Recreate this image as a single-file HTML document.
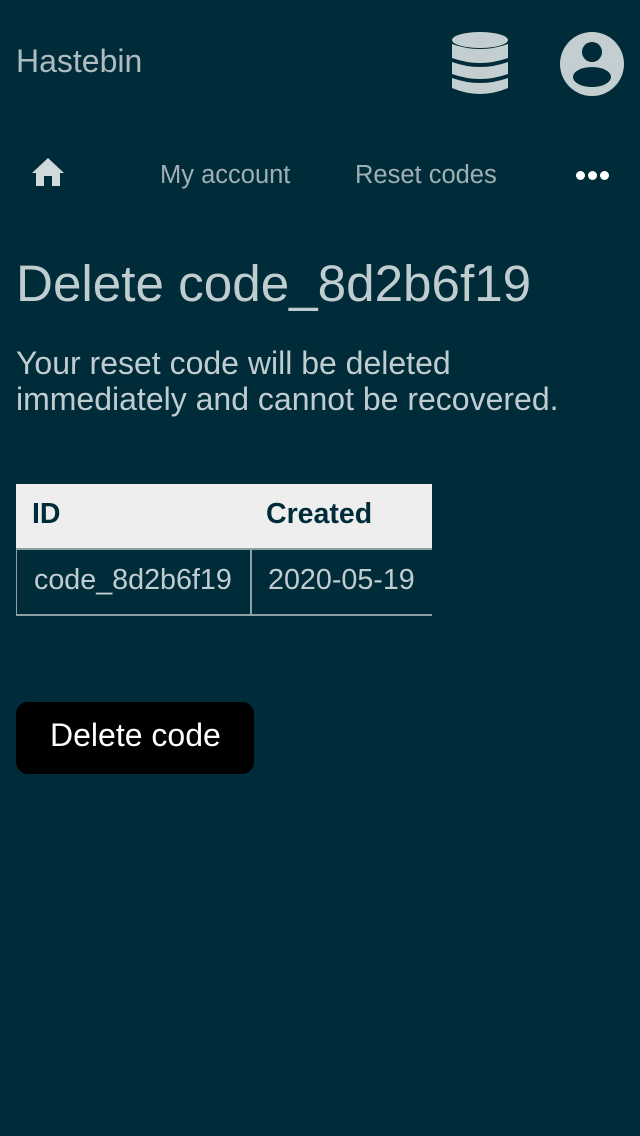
<!DOCTYPE html>
<html><head><meta charset="utf-8"><style>
body{margin:0;width:640px;height:1136px;background:#002b38;font-family:"Liberation Sans",sans-serif;color:#c0cdd0;position:relative;overflow:hidden}
.a{position:absolute}
</style></head><body>
<div class="a" style="left:16px;top:43px;font-size:32px;color:#aebcc0">Hastebin</div>
<svg class="a" style="left:452px;top:32px" width="56" height="64" viewBox="0 0 56 64">
<ellipse cx="28" cy="8" rx="28" ry="8" fill="#c3ced1"/>
<path d="M0 12 Q28 22 56 12 V26 Q28 36 0 26Z" fill="#c3ced1"/>
<path d="M0 30 Q28 40 56 30 V42 Q28 52 0 42Z" fill="#c3ced1"/>
<path d="M0 46 Q28 56 56 46 V56 Q28 68 0 56Z" fill="#c3ced1"/>
</svg>
<svg class="a" style="left:560px;top:32px" width="64" height="64" viewBox="0 0 64 64">
<circle cx="32" cy="32" r="32" fill="#c3ced1"/>
<circle cx="32" cy="20" r="10" fill="#002b38"/>
<ellipse cx="32" cy="45" rx="19" ry="10" fill="#002b38"/>
</svg>
<svg class="a" style="left:32px;top:158px" width="32" height="28" viewBox="0 0 32 28">
<path d="M16 0 L32 15 H28 V28 H20 V18 H12 V28 H4 V15 H0Z" fill="#d0dadc"/>
</svg>
<div class="a" style="left:160px;top:161px;font-size:25.5px;color:#9fb0b5">My account</div>
<div class="a" style="left:355px;top:161px;font-size:25.5px;color:#9fb0b5">Reset codes</div>
<div class="a" style="left:576px;top:171px;width:34px;height:9px">
<span class="a" style="left:0;top:0;width:9px;height:9px;border-radius:50%;background:#fff"></span>
<span class="a" style="left:12px;top:0;width:9px;height:9px;border-radius:50%;background:#fff"></span>
<span class="a" style="left:24px;top:0;width:9px;height:9px;border-radius:50%;background:#fff"></span>
</div>
<div class="a" style="left:16px;top:254px;font-size:51.2px;color:#c0cdd0">Delete code_8d2b6f19</div>
<div class="a" style="left:16px;top:345px;font-size:32px;line-height:36px;color:#c0cdd0">Your reset code will be deleted<br>immediately and cannot be recovered.</div>
<div class="a" style="left:16px;top:484px;width:416px;height:64px;background:#eeeeee;border-bottom:2px solid #8fa0a5"></div>
<div class="a" style="left:32px;top:498px;font-size:28.5px;font-weight:bold;color:#002b38">ID</div>
<div class="a" style="left:266px;top:498px;font-size:28.5px;font-weight:bold;color:#002b38">Created</div>
<div class="a" style="left:16px;top:550px;width:1px;height:65px;background:#8fa0a5"></div>
<div class="a" style="left:250px;top:550px;width:2px;height:65px;background:#8fa0a5"></div>
<div class="a" style="left:16px;top:614px;width:416px;height:2px;background:#8fa0a5"></div>
<div class="a" style="left:34px;top:564px;font-size:28.7px;color:#c0cdd0">code_8d2b6f19</div>
<div class="a" style="left:268px;top:564px;font-size:28.7px;color:#c0cdd0">2020-05-19</div>
<div class="a" style="left:16px;top:702px;width:238px;height:72px;background:#000;border-radius:12px"></div>
<div class="a" style="left:50px;top:717px;font-size:32px;color:#fff">Delete code</div>
</body></html>
